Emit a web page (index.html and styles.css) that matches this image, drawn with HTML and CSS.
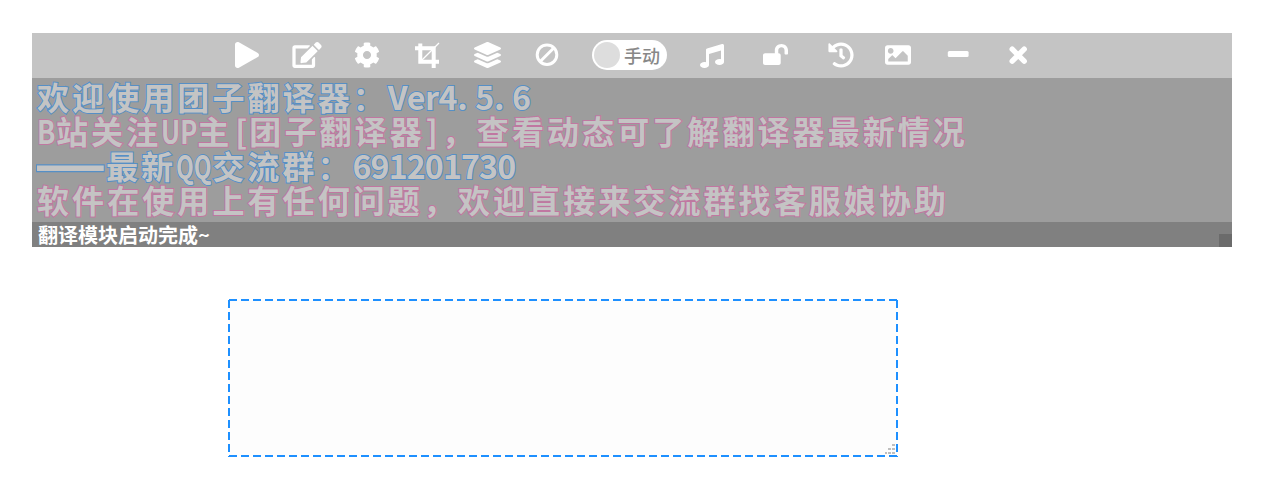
FILE: index.html
```html
<!DOCTYPE html>
<html lang="zh-CN">
<head>
<meta charset="utf-8">
<title>团子翻译器</title>
<link rel="stylesheet" href="styles.css">
</head>
<body>
<main class="window">
  <nav class="toolbar">
    <span class="tool"><svg width="24" height="26" viewBox="0 0 448 512" preserveAspectRatio="none"><path d="M424.4 214.7L72.4 6.6C43.8-10.3 0 6.1 0 47.9V464c0 37.5 40.7 60.1 72.4 41.3l352-208c31.4-18.5 31.5-64.1 0-82.6z"/></svg></span>
    <span class="tool"><svg width="30" height="26" viewBox="0 0 576 512"><path d="M402.6 83.2l90.2 90.2c3.8 3.8 3.8 10 0 13.8L274.4 405.6l-92.8 10.3c-12.4 1.4-22.9-9.1-21.5-21.5l10.3-92.8L388.8 83.2c3.8-3.8 10-3.8 13.8 0zm162-22.9l-48.8-48.8c-15.2-15.2-39.9-15.2-55.2 0l-35.4 35.4c-3.8 3.8-3.8 10 0 13.8l90.2 90.2c3.8 3.8 10 3.8 13.8 0l35.4-35.4c15.2-15.3 15.2-40 0-55.2zM384 346.2V448H64V128h229.8c3.2 0 6.2-1.3 8.5-3.5l40-40c7.6-7.6 2.2-20.5-8.5-20.5H48C21.5 64 0 85.5 0 112v352c0 26.5 21.5 48 48 48h352c26.5 0 48-21.5 48-48V306.2c0-10.7-12.9-16-20.5-8.5l-40 40c-2.2 2.3-3.5 5.3-3.5 8.5z"/></svg></span>
    <span class="tool"><svg width="26" height="26" viewBox="0 0 512 512"><path d="M487.4 315.7l-42.6-24.6c4.3-23.2 4.3-47 0-70.2l42.6-24.6c4.9-2.8 7.1-8.6 5.5-14-11.1-35.6-30-67.8-54.7-94.6-3.8-4.1-10-5.1-14.8-2.3L380.8 110c-17.9-15.4-38.5-27.3-60.8-35.1V25.8c0-5.6-3.9-10.5-9.4-11.7-36.7-8.2-74.3-7.8-109.2 0-5.5 1.2-9.4 6.1-9.4 11.7V75c-22.2 7.9-42.8 19.8-60.8 35.1L88.7 85.5c-4.9-2.8-11-1.9-14.8 2.3-24.7 26.7-43.6 58.9-54.7 94.6-1.7 5.4.6 11.2 5.5 14L67.3 221c-4.3 23.2-4.3 47 0 70.2l-42.6 24.6c-4.9 2.8-7.1 8.6-5.5 14 11.1 35.6 30 67.8 54.7 94.6 3.8 4.1 10 5.1 14.8 2.3l42.6-24.6c17.9 15.4 38.5 27.3 60.8 35.1v49.2c0 5.6 3.9 10.5 9.4 11.7 36.7 8.2 74.3 7.8 109.2 0 5.5-1.2 9.4-6.1 9.4-11.7v-49.2c22.2-7.9 42.8-19.8 60.8-35.1l42.6 24.6c4.9 2.8 11 1.9 14.8-2.3 24.7-26.7 43.6-58.9 54.7-94.6 1.5-5.5-.7-11.3-5.6-14.1zM256 336c-44.1 0-80-35.9-80-80s35.9-80 80-80 80 35.9 80 80-35.9 80-80 80z"/></svg></span>
    <span class="tool"><svg class="line" width="26" height="26" viewBox="0 0 26 26"><path stroke-width="4" d="M6.3 1.5V19.7H25M1 6.3H19.7V26"/><path stroke-width="1.2" d="M7.5 18.5L25 1"/></svg></span>
    <span class="tool"><svg width="27" height="26" viewBox="0 0 512 512" preserveAspectRatio="none"><path d="M12.41 148.02l232.94 105.67c6.8 3.09 14.49 3.09 21.29 0l232.94-105.67c16.55-7.51 16.55-32.52 0-40.03L266.65 2.31a25.607 25.607 0 0 0-21.29 0L12.41 107.98c-16.55 7.51-16.55 32.53 0 40.04zm487.18 88.28l-58.09-26.33-161.64 73.27c-7.56 3.43-15.59 5.17-23.86 5.17s-16.29-1.74-23.86-5.17L70.51 209.97l-58.1 26.33c-16.55 7.5-16.55 32.5 0 40l232.94 105.59c6.8 3.08 14.49 3.08 21.29 0L499.59 276.3c16.55-7.5 16.55-32.5 0-40zm0 127.8l-57.87-26.23-161.86 73.37c-7.56 3.43-15.59 5.17-23.86 5.17s-16.29-1.74-23.86-5.17L70.29 337.87 12.41 364.1c-16.55 7.5-16.55 32.5 0 40l232.94 105.59c6.8 3.08 14.49 3.08 21.29 0L499.59 404.1c16.55-7.5 16.55-32.5 0-40z"/></svg></span>
    <span class="tool"><svg class="line" width="26" height="26" viewBox="0 0 26 26"><circle cx="13" cy="12.7" r="9.8" stroke-width="3"/><path stroke-width="3" d="M6.5 19.2L19.5 6.2"/></svg></span>
    <span class="mode"><span class="knob"></span><span class="mode-label">手动</span></span>
    <span class="tool"><svg class="drop" width="24" height="24" viewBox="0 0 512 512"><path d="M511.99 32.01c0-21.71-21.1-37.01-41.6-30.51L150.4 96c-13.3 4.2-22.4 16.5-22.4 30.5v261.42c-10.05-2.38-20.72-3.92-32-3.92-53.02 0-96 28.65-96 64s42.98 64 96 64 96-28.65 96-64V214.31l256-75.02v184.63c-10.05-2.38-20.72-3.92-32-3.92-53.02 0-96 28.65-96 64s42.98 64 96 64 96-28.65 96-64l-.01-351.99z"/></svg></span>
    <span class="tool wide"><svg class="lock" width="25" height="21" viewBox="0 0 576 512" preserveAspectRatio="none"><path d="M423.5 0C339.5.3 272 69.5 272 153.5V224H48c-26.5 0-48 21.5-48 48v192c0 26.5 21.5 48 48 48h312c26.5 0 48-21.5 48-48V272c0-26.5-21.5-48-48-48h-8v-71.1c0-39.6 31.7-72.5 71.3-72.9 40-.4 72.7 32.1 72.7 72v80c0 13.3 10.7 24 24 24h32c13.3 0 24-10.7 24-24v-80C576 68 507.5-.3 423.5 0z"/></svg></span>
    <span class="tool wide"><svg width="26" height="26" viewBox="0 0 512 512"><path d="M504 255.531c.253 136.64-111.18 248.372-247.82 248.468-59.015.042-113.223-20.53-155.822-54.911-11.077-8.94-11.905-25.541-1.839-35.607l11.267-11.267c8.609-8.609 22.353-9.551 31.891-1.984C173.062 425.135 212.781 440 256 440c101.705 0 184-82.311 184-184 0-101.705-82.311-184-184-184-48.814 0-93.149 18.969-126.068 49.932l50.754 50.754c10.08 10.08 2.941 27.314-11.313 27.314H24c-8.837 0-16-7.163-16-16V38.627c0-14.254 17.234-21.393 27.314-11.314l49.372 49.372C129.209 34.136 189.552 8 256 8c136.81 0 247.747 110.78 248 247.531zm-180.912 78.784l9.823-12.63c8.138-10.463 6.253-25.542-4.21-33.679L288 256.349V152c0-13.255-10.745-24-24-24h-16c-13.255 0-24 10.745-24 24v135.651l65.409 50.874c10.463 8.137 25.541 6.253 33.679-4.21z"/></svg></span>
    <span class="tool narrow"><svg width="26" height="26" viewBox="0 0 512 512"><path d="M464 448H48c-26.51 0-48-21.49-48-48V112c0-26.51 21.49-48 48-48h416c26.51 0 48 21.49 48 48v288c0 26.51-21.49 48-48 48zM112 120c-30.928 0-56 25.072-56 56s25.072 56 56 56 56-25.072 56-56-25.072-56-56-56zM64 384h384V272l-87.515-87.515c-4.686-4.686-12.284-4.686-16.971 0L208 320l-55.515-55.515c-4.686-4.686-12.284-4.686-16.971 0L64 336v48z"/></svg></span>
    <span class="tool widest"><svg width="26" height="26" viewBox="0 0 26 26"><rect x="2.8" y="9" width="20.8" height="6" rx="1.5"/></svg></span>
    <span class="tool narrow"><svg class="line" width="26" height="26" viewBox="0 0 26 26"><path stroke-width="5.4" stroke-linecap="round" stroke-linejoin="round" d="M7.2 7.2L19.2 19.2M19.2 7.2L7.2 19.2"/></svg></span>
  </nav>
  <section class="messages">
    <p class="msg blue">欢迎使用团子翻译器&#65306;<span class="latin version">Ver4<span class="dot">.</span>5<span class="dot">.</span>6</span></p>
    <p class="msg pink"><span class="latin letter-b">B</span>站关注<span class="latin up">UP</span>主<span class="latin open">[</span>团子翻译器<span class="latin close">]</span>&#65292;查看动态可了解翻译器最新情况</p>
    <p class="msg blue"><span class="rule">——</span>最新<span class="latin qq">QQ</span>交流群&#65306;<span class="latin number">691201730</span></p>
    <p class="msg pink">软件在使用上有任何问题&#65292;欢迎直接来交流群找客服娘协助</p>
  </section>
  <footer class="status"><span class="status-text">翻译模块启动完成~</span><span class="grip"></span></footer>
</main>
<section class="range">
  <svg width="670" height="158" viewBox="0 0 670 158">
    <rect class="range-fill" x="1" y="1" width="668" height="156"/>
    <path class="range-edge" d="M1 1H670M1 1V158M669 1V158M1 157H670"/>
    <path class="range-grip" d="M664 145h3v2h-3zM660 149h3v2h-3zM664 149h3v2h-3zM657 153h2v2h-2zM660 153h3v2h-3zM664 153h3v2h-3z"/>
  </svg>
</section>
</body>
</html>
```
FILE: styles.css
```css
body {
  margin: 0;
  padding: 33px 32px 0;
  background: #fff;
  font-family: "Noto Sans CJK SC", sans-serif;
}
.window { width: 1200px; }
.toolbar {
  display: flex;
  align-items: center;
  height: 45px;
  padding: 0 0 1px 185px;
  box-sizing: border-box;
  background: #c4c4c4;
}
.tool {
  display: flex;
  justify-content: center;
  width: 60px;
  flex: none;
}
.wide { width: 66px; }
.narrow { width: 48px; }
.widest { width: 72px; }
.tool svg { display: block; fill: #fff; }
.tool .line { fill: none; stroke: #fff; }
.tool .drop { margin-top: 1px; }
.tool .lock { margin-bottom: 2px; }
.mode {
  display: flex;
  align-items: center;
  flex: none;
  width: 75px;
  height: 30px;
  margin: 0 15px;
  padding-left: 2px;
  box-sizing: border-box;
  border-radius: 15px;
  background: #fff;
}
.knob { width: 26px; height: 26px; border-radius: 50%; background: #ddd; }
.mode-label {
  margin-left: 4px;
  font-size: 18px;
  line-height: 28px;
  font-weight: 500;
  color: #888;
}
.messages {
  height: 144px;
  padding: 1px 0 0 5px;
  box-sizing: border-box;
  background: #9d9d9d;
}
.msg {
  display: flex;
  margin: 0;
  height: 34.3px;
  line-height: 34.3px;
  font-size: 32px;
  font-weight: 700;
  letter-spacing: 3.08px;
  white-space: pre;
  color: #c4c4c4;
  paint-order: stroke fill;
  -webkit-text-stroke: 2px #568fc6;
}
.pink { -webkit-text-stroke-color: #c077a1; }
.latin { display: block; flex: none; letter-spacing: 0; transform-origin: 0 50%; }
.version { width: 144px; letter-spacing: -0.3px; }
.dot { margin-right: 8px; }
.letter-b { width: 19px; transform: scaleX(0.85); }
.up { width: 36px; transform: scaleX(0.8); }
.open, .close { width: 17px; padding-left: 3px; box-sizing: border-box; }
.close { padding-left: 1px; }
.rule {
  flex: none;
  width: 69px;
  letter-spacing: 0;
  transform: translate(-2px, -5px) scale(1.3, 1.8);
  transform-origin: 0 50%;
  -webkit-text-stroke-width: 1.5px;
}
.qq { width: 36px; transform: scaleX(0.72); }
.number { width: 163px; letter-spacing: -0.8px; }
.status {
  display: flex;
  justify-content: space-between;
  align-items: flex-end;
  height: 25px;
  background: #808080;
}
.status-text {
  padding-left: 6px;
  font-size: 20px;
  line-height: 25px;
  font-weight: 700;
  color: #fff;
}
.grip { width: 13px; height: 13px; background: #6b6b6b; }
.range { margin: 52px 0 0 196px; }
.range svg { display: block; }
.range-fill { fill: #fdfdfd; }
.range-edge { fill: none; stroke: #1e90ff; stroke-width: 2; stroke-dasharray: 8 4; }
.range-grip { fill: #bfbfbf; }
```
